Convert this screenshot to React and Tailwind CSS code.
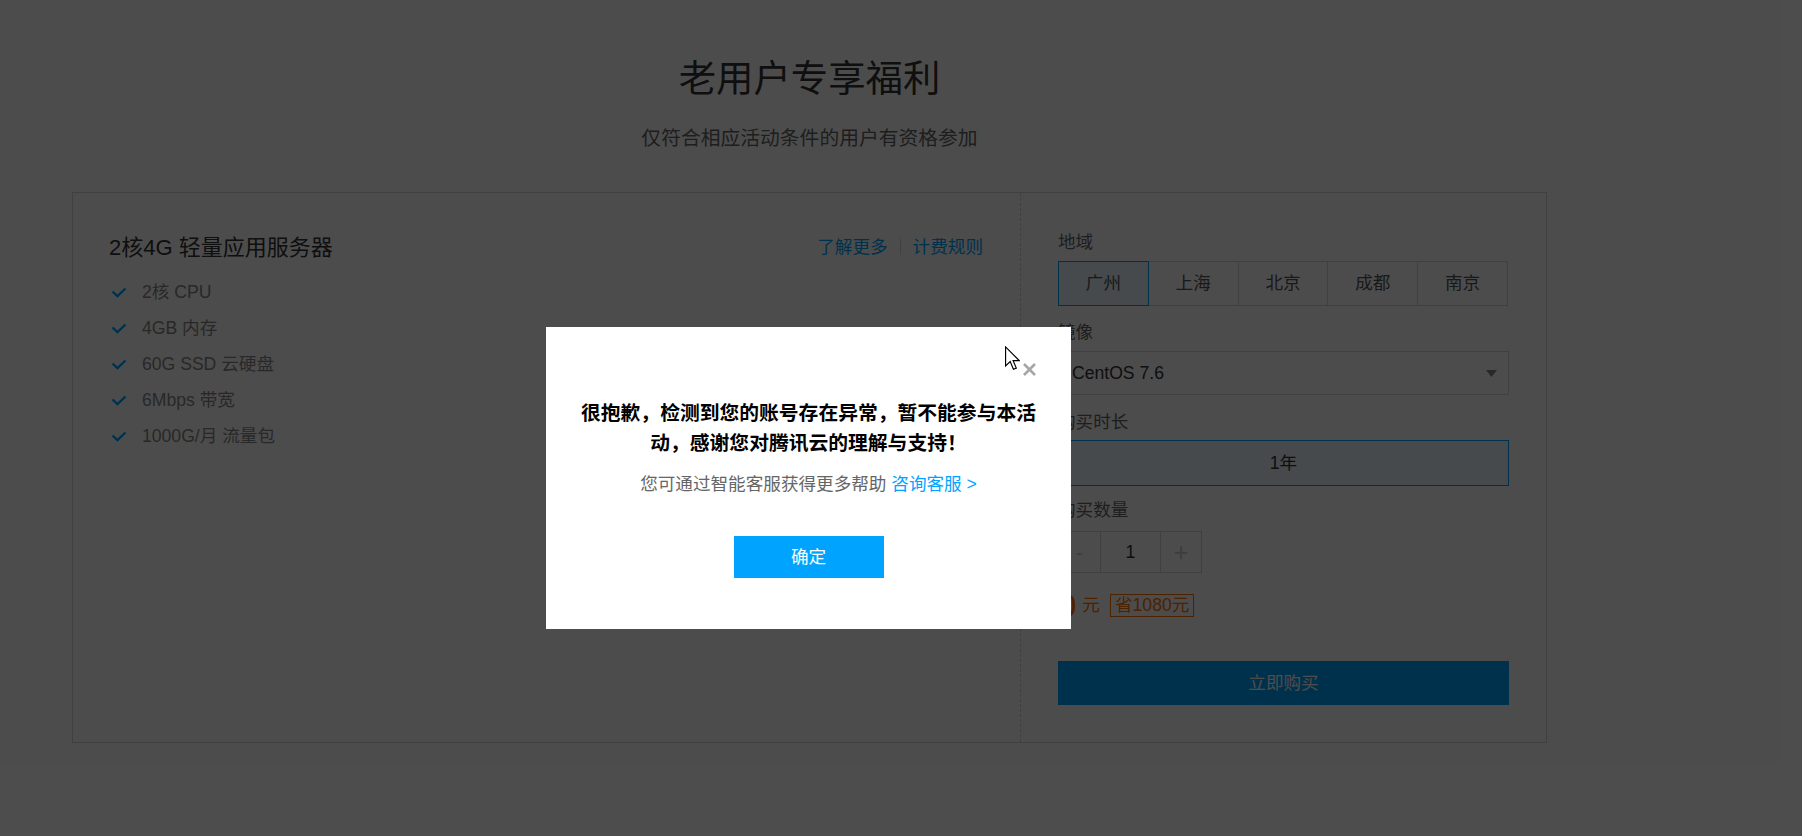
import React from "react";

const font = { fontFamily: '"Liberation Sans", "Noto Sans CJK SC", sans-serif' };

const features = ["2核 CPU", "4GB 内存", "60G SSD 云硬盘", "6Mbps 带宽", "1000G/月 流量包"];
const regions = ["广州", "上海", "北京", "成都", "南京"];

function Check() {
  return (
    <svg width="16" height="11" viewBox="0 0 16 11" fill="none">
      <polyline points="1.5,4.5 6.5,9.2 14.5,1.5" stroke="#00a4ff" strokeWidth="2.4" />
    </svg>
  );
}

export default function App() {
  return (
    <div className="relative w-[1802px] h-[836px] bg-white overflow-hidden text-[17.6px] text-[#333]" style={font}>
      {/* page under the mask */}
      <div className="ml-[72px] w-[1475px] pt-[57px]">
        <h1 className="text-center text-[37.4px] leading-[44px] text-[#333]">老用户专享福利</h1>
        <p className="mt-[23px] text-center text-[19.8px] leading-[28px] text-[#666]">仅符合相应活动条件的用户有资格参加</p>

        <div className="mt-[40px] h-[551px] border border-[#d5d5d5] flex">
          {/* left: product info */}
          <div className="flex-1 pl-[36px] pr-[37px] pt-[39px]">
            <div className="flex items-center justify-between h-[30px]">
              <div className="text-[22px] text-[#333]">2核4G 轻量应用服务器</div>
              <div className="flex items-center text-[#00a4ff]">
                <span>了解更多</span>
                <span className="mx-[12px] h-[16px] border-l border-[#d5d5d5]" />
                <span>计费规则</span>
              </div>
            </div>
            <ul className="mt-[12px]">
              {features.map((f) => (
                <li key={f} className="flex items-center h-[36px] pl-[2px] text-[#888]">
                  <Check />
                  <span className="ml-[15px]">{f}</span>
                </li>
              ))}
            </ul>
          </div>

          {/* right: order form */}
          <div className="w-[526px] border-l border-dashed border-[#d5d5d5] pl-[37px] pr-[37px] pt-[36px]">
            <div className="leading-[26px] text-[#666]">地域</div>
            <div className="mt-[6px] flex w-[450px]">
              {regions.map((r, i) => (
                <div
                  key={r}
                  className={
                    i === 0
                      ? "relative z-[1] flex-1 h-[45px] flex items-center justify-center border border-[#00a4ff] bg-[#ebf7ff] text-[#555]"
                      : "flex-1 h-[45px] -ml-px flex items-center justify-center border border-[#d5d5d5] text-[#555]"
                  }
                >
                  {r}
                </div>
              ))}
            </div>

            <div className="mt-[13px] leading-[26px] text-[#666]">镜像</div>
            <div className="mt-[6px] h-[44px] border border-[#d5d5d5] flex items-center justify-between pl-[13px] pr-[11px]">
              <span className="text-[#333]">CentOS 7.6</span>
              <svg width="11" height="7" viewBox="0 0 11 7">
                <polygon points="0,0 11,0 5.5,7" fill="#888" />
              </svg>
            </div>

            <div className="mt-[14px] leading-[26px] text-[#666]">购买时长</div>
            <div className="mt-[5px] h-[46px] border border-[#00a4ff] bg-[#ebf7ff] flex items-center justify-center text-[#333]">
              1年
            </div>

            <div className="mt-[11px] leading-[26px] text-[#666]">购买数量</div>
            <div className="mt-[8px] flex h-[42px] w-[144px]">
              <div className="w-[43px] border border-[#d5d5d5] flex items-center justify-center text-[22px] text-[#ccc]">-</div>
              <div className="w-[61px] -ml-px border border-[#d5d5d5] flex items-center justify-center text-[#333]">1</div>
              <div className="w-[42px] -ml-px border border-[#d5d5d5] flex items-center justify-center text-[26px] text-[#ccc]">+</div>
            </div>

            <div className="mt-[20px] h-[24px] flex items-center text-[#ff7200]">
              <span className="text-[33px] leading-none">0</span>
              <span className="ml-[6px]">元</span>
              <span className="ml-[10px] h-[23px] px-[4px] border border-[#ff7200] flex items-center">省1080元</span>
            </div>

            <div className="mt-[44px] h-[44px] bg-[#00a4ff] text-white flex items-center justify-center">立即购买</div>
          </div>
        </div>
      </div>

      {/* mask */}
      <div className="absolute inset-0 z-20 bg-black/70" />

      {/* dialog */}
      <div className="absolute z-30 left-[546px] top-[327px] w-[525px] h-[302px] bg-white px-[30px] pt-[71px] text-center">
        <button className="absolute left-[476px] top-[35px] w-[15px] h-[15px]">
          <svg width="15" height="15" viewBox="0 0 15 15">
            <path d="M2 2 L13 13 M13 2 L2 13" stroke="#a6a6a6" strokeWidth="2.6" />
          </svg>
        </button>
        <svg className="absolute left-[459px] top-[19px]" width="15" height="25" viewBox="0 0 13 21">
          <path d="M0.5 0.5 L0.5 17 L4.5 13.2 L7.3 19.8 L9.8 18.8 L7 12.3 L12.3 12.3 Z" fill="#fff" stroke="#000" strokeWidth="1" />
        </svg>
        <h2 className="text-[19.8px] leading-[30px] font-bold text-black">
          很抱歉，检测到您的账号存在异常，暂不能参与本活动，感谢您对腾讯云的理解与支持！
        </h2>
        <p className="mt-[13px] leading-[26px] text-[#666]">
          您可通过智能客服获得更多帮助 <span className="text-[#00a4ff]">咨询客服 &gt;</span>
        </p>
        <button className="mt-[39px] w-[150px] h-[42px] bg-[#00a4ff] text-white text-[17.6px]">确定</button>
      </div>
    </div>
  );
}
